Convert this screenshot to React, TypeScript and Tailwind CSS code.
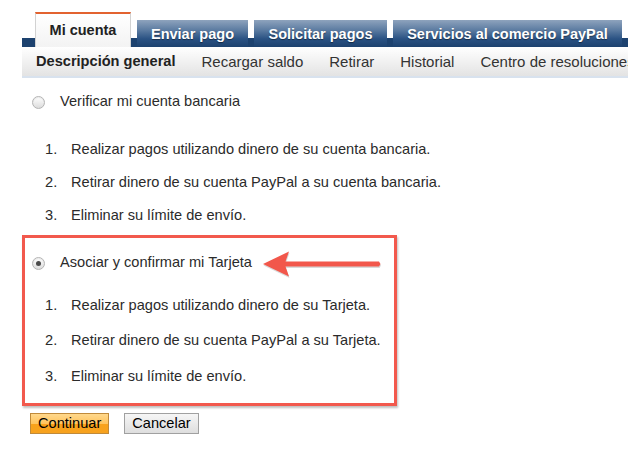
import React from "react"

const tabs = [
  { label: "Enviar pago", w: "w-[111px]" },
  { label: "Solicitar pagos", w: "w-[133px]" },
  { label: "Servicios al comercio PayPal", w: "w-[229px]" },
]

const subnav = ["Recargar saldo", "Retirar", "Historial", "Centro de resoluciones"]

const bankItems = [
  "Realizar pagos utilizando dinero de su cuenta bancaria.",
  "Retirar dinero de su cuenta PayPal a su cuenta bancaria.",
  "Eliminar su límite de envío.",
]

const cardItems = [
  "Realizar pagos utilizando dinero de su Tarjeta.",
  "Retirar dinero de su cuenta PayPal a su Tarjeta.",
  "Eliminar su límite de envío.",
]

const Radio = ({ checked }: { checked?: boolean }) => (
  <span className="flex h-[13px] w-[13px] shrink-0 items-center justify-center rounded-full border border-[#b4b4b4] bg-[linear-gradient(to_bottom,#ffffff,#dcdcdc)] shadow-[inset_0_1px_1px_rgba(0,0,0,0.08)]">
    {checked && <span className="h-[5px] w-[5px] rounded-full bg-[#4a4a4a]" />}
  </span>
)

const Steps = ({ items, rowH }: { items: string[]; rowH: string }) => (
  <ol className="pl-[13px]">
    {items.map((t, i) => (
      <li key={i} className={`flex items-center ${rowH}`}>
        <span className="w-[26px]">{i + 1}.</span>
        <span>{t}</span>
      </li>
    ))}
  </ol>
)

export default function App() {
  return (
    <div className="relative h-[471px] w-[628px] overflow-hidden bg-white font-['Liberation_Sans',Arial,sans-serif] text-[14.6px] text-[#2b2b2b]">
      {/* top tabs */}
      <div className="ml-[22px] mt-[12px]">
        <div className="flex h-[35px] items-end whitespace-nowrap bg-[linear-gradient(to_bottom,transparent_26px,#1d426f_26px)] pl-[13px]">
          <div className="flex h-[35px] w-[96px] items-center justify-center border-x border-t-2 border-x-[#d2d2d2] border-t-[#e2622f] bg-[linear-gradient(to_bottom,#ffffff,#f3f3f3)] text-[14.5px] font-bold text-[#222]">
            Mi cuenta
          </div>
          {tabs.map((t) => (
            <div
              key={t.label}
              className={`ml-[6px] flex h-[27px] ${t.w} shrink-0 items-center justify-center bg-[linear-gradient(to_bottom,#8ea3bd_0%,#5f7ea3_35%,#2a5283_70%,#1d426f_100%)] pt-[2px] text-[14.5px] font-bold text-white [text-shadow:0_1px_1px_rgba(0,0,0,0.45)]`}
            >
              {t.label}
            </div>
          ))}
        </div>

        {/* sub navigation */}
        <div className="flex h-[31px] items-center gap-[26px] whitespace-nowrap border-b-2 border-b-[#d8e2ee] bg-[linear-gradient(to_bottom,#ffffff,#e3e3e3)] pl-[14px] pt-[1px] text-[15px] text-[#333]">
          <span className="text-[14.6px] font-bold text-[#222]">Descripción general</span>
          {subnav.map((s) => (
            <span key={s}>{s}</span>
          ))}
        </div>
      </div>

      {/* content */}
      <div className="ml-[22px]">
        <div className="pl-[10px]">
          <div className="mt-[14px] flex h-[20px] items-center gap-[15px]">
            <Radio />
            <span>Verificar mi cuenta bancaria</span>
          </div>
          <div className="mt-[21px]">
            <Steps items={bankItems} rowH="h-[33px]" />
          </div>
        </div>

        <div className="mt-[3px] w-[375px] border-[3px] border-[#f2594d] pb-[8px] pl-[7px] pt-[15px] shadow-[1px_2px_2px_rgba(0,0,0,0.25)]">
          <div className="flex h-[20px] items-center gap-[15px]">
            <Radio checked />
            <span>Asociar y confirmar mi Tarjeta</span>
          </div>
          <div className="mt-[15px]">
            <Steps items={cardItems} rowH="h-[35.5px]" />
          </div>
        </div>

        <div className="mt-[7.5px] flex gap-[15px] pl-[8px]">
          <button className="h-[21px] border border-[#c08a3a] bg-[linear-gradient(to_bottom,#ffd88c_0%,#ffc45e_50%,#f9a21b_51%,#f7a21e_100%)] px-[7px] text-[14.6px] leading-none text-black">
            Continuar
          </button>
          <button className="h-[21px] border border-[#a0a0a0] bg-[linear-gradient(to_bottom,#f6f6f6,#dedede)] px-[7px] text-[14.6px] leading-none text-black">
            Cancelar
          </button>
        </div>
      </div>

      {/* annotation arrow */}
      <svg
        className="absolute left-[262px] top-[250px]"
        width="122"
        height="30"
        viewBox="0 0 122 30"
      >
        <polygon
          points="1,14 27,1.5 23.5,11.5 117,11.5 118.5,14 117,16.5 23.5,16.5 27,26.5"
          fill="rgba(0,0,0,0.15)"
          transform="translate(0.5,1.5)"
        />
        <polygon
          points="1,14 27,1.5 23.5,11.5 117,11.5 118.5,14 117,16.5 23.5,16.5 27,26.5"
          fill="#f2574b"
        />
      </svg>
    </div>
  )
}
